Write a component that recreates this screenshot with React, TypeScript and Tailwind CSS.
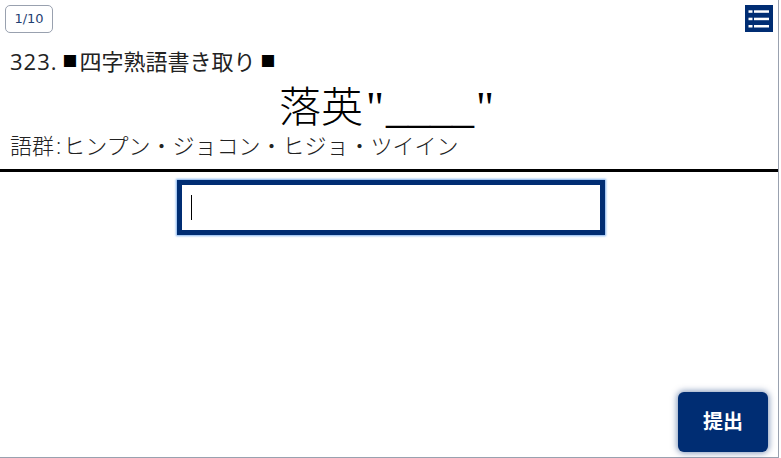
import React from 'react'

const jp = { fontFamily: '"Open Sans", "Noto Sans CJK JP", sans-serif' }

const App: React.FC = () => {
  return (
    <div className="h-[458px] w-[781px] bg-white">
      <div className="flex h-[458px] w-[779px] flex-col border-r border-b border-gray-400" style={jp}>
        {/* Top bar */}
        <div className="flex h-[48px] items-start justify-between pt-[5px] pr-[5px] pl-[5px]">
          <div className="flex h-[28px] w-[48px] items-center justify-center rounded-[5px] border border-gray-400 font-['DejaVu_Sans'] text-[13px] text-[#1f3f73]">
            1/10
          </div>
          <button className="flex h-[27px] w-[28px] items-center justify-center bg-[#002d73]">
            <svg width="24" height="20" viewBox="0 0 24 20" fill="white">
              <rect x="1.5" y="1.3" width="4" height="2.5" />
              <rect x="7" y="1.3" width="15" height="2.5" />
              <rect x="1.5" y="8.7" width="4" height="2.5" />
              <rect x="7" y="8.7" width="15" height="2.5" />
              <rect x="1.5" y="16" width="4" height="2.5" />
              <rect x="7" y="16" width="15" height="2.5" />
            </svg>
          </button>
        </div>

        {/* Question */}
        <div className="border-b-[3px] border-black pb-[11px]">
          <p className="flex h-[26px] items-center pl-[10px] text-[22px] leading-[26px] text-[#222]">
            <span className="tracking-[1px]">323.</span>
            <span className="mr-[2px] ml-[5px] text-[15px] text-black">■</span>
            <span>四字熟語書き取り</span>
            <span className="ml-[5px] text-[15px] text-black">■</span>
          </p>
          <p className="mt-[9px] h-[50px] pr-[3px] text-center font-['Liberation_Serif','Noto_Sans_CJK_JP',serif] text-[44px] leading-[50px] text-black">
            <span className="text-[42px] font-light">落英</span>
            <span className="pr-[2px] pl-[3px]">"</span>____<span className="px-[2px]">"</span>
          </p>
          <p className="h-[25px] pl-[10px] text-[22px] leading-[25px] font-light text-[#222]">
            語群<span className="mx-[2px]">:</span>ヒンプン・ジョコン・ヒジョ・ツイイン
          </p>
        </div>

        {/* Answer */}
        <div className="flex justify-center pt-[8px] pl-[3px]">
          <div className="flex h-[55px] w-[428px] items-center border-[5px] border-[#002d73] pl-[9px] shadow-[0_0_2px_1px_#7fb0ee]">
            <span className="h-[25px] w-px bg-black" />
          </div>
        </div>

        {/* Submit */}
        <div className="mt-auto flex justify-end pr-[10px] pb-[5px]">
          <button className="h-[60px] w-[90px] rounded-[6px] bg-[#002d73] text-[20px] font-bold text-white shadow-[0_0_6px_1px_rgba(0,45,115,0.5)]">
            提出
          </button>
        </div>
      </div>
    </div>
  )
}

export default App
